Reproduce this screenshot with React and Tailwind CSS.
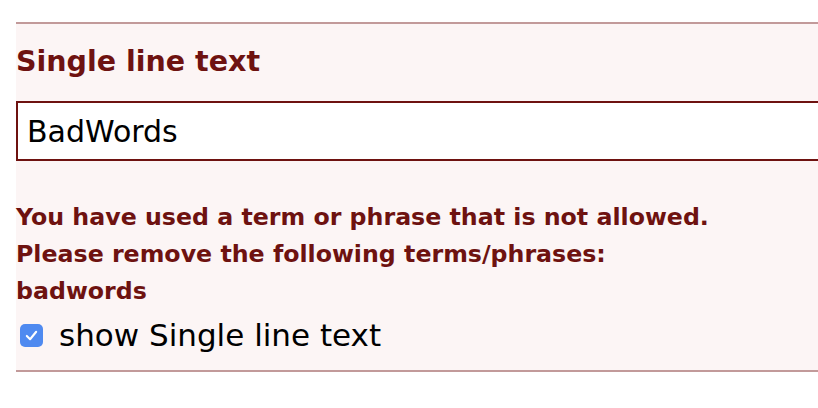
export default function App() {
  return (
    <div className="w-[818px] h-[408px] bg-white overflow-hidden pt-[22px] pl-4" style={{ fontFamily: '"DejaVu Sans", Verdana, sans-serif' }}>
      <div className="border-t-2 border-b-2 border-[#c29a9a] bg-[#fcf5f5] w-[900px] h-[350px] pt-[14px]">
        <div className="text-[28.5px] font-bold text-[#6e1210] leading-[48px]">Single line text</div>
        <div className="mt-[15px] h-[60px] border-2 border-[#6e1210] bg-white flex items-center pl-[9px] text-[30px] text-black">BadWords</div>
        <div className="mt-[38px] text-[23.7px] font-bold text-[#6e1210] leading-[37px]">
          <div>You have used a term or phrase that is not allowed.</div>
          <div>Please remove the following terms/phrases:</div>
          <div>badwords</div>
        </div>
        <label className="mt-[3px] flex items-center gap-[16px] pl-1 text-[31px] text-black leading-[44px]">
          <span className="w-[23px] h-[23px] rounded-[5px] bg-[#4f8af0] flex items-center justify-center">
            <svg width="15" height="15" viewBox="0 0 16 16"><path d="M3 8.5 L6.5 12 L13 4" fill="none" stroke="white" strokeWidth="2.2" strokeLinecap="round" strokeLinejoin="round" /></svg>
          </span>
          show Single line text
        </label>
      </div>
    </div>
  );
}
